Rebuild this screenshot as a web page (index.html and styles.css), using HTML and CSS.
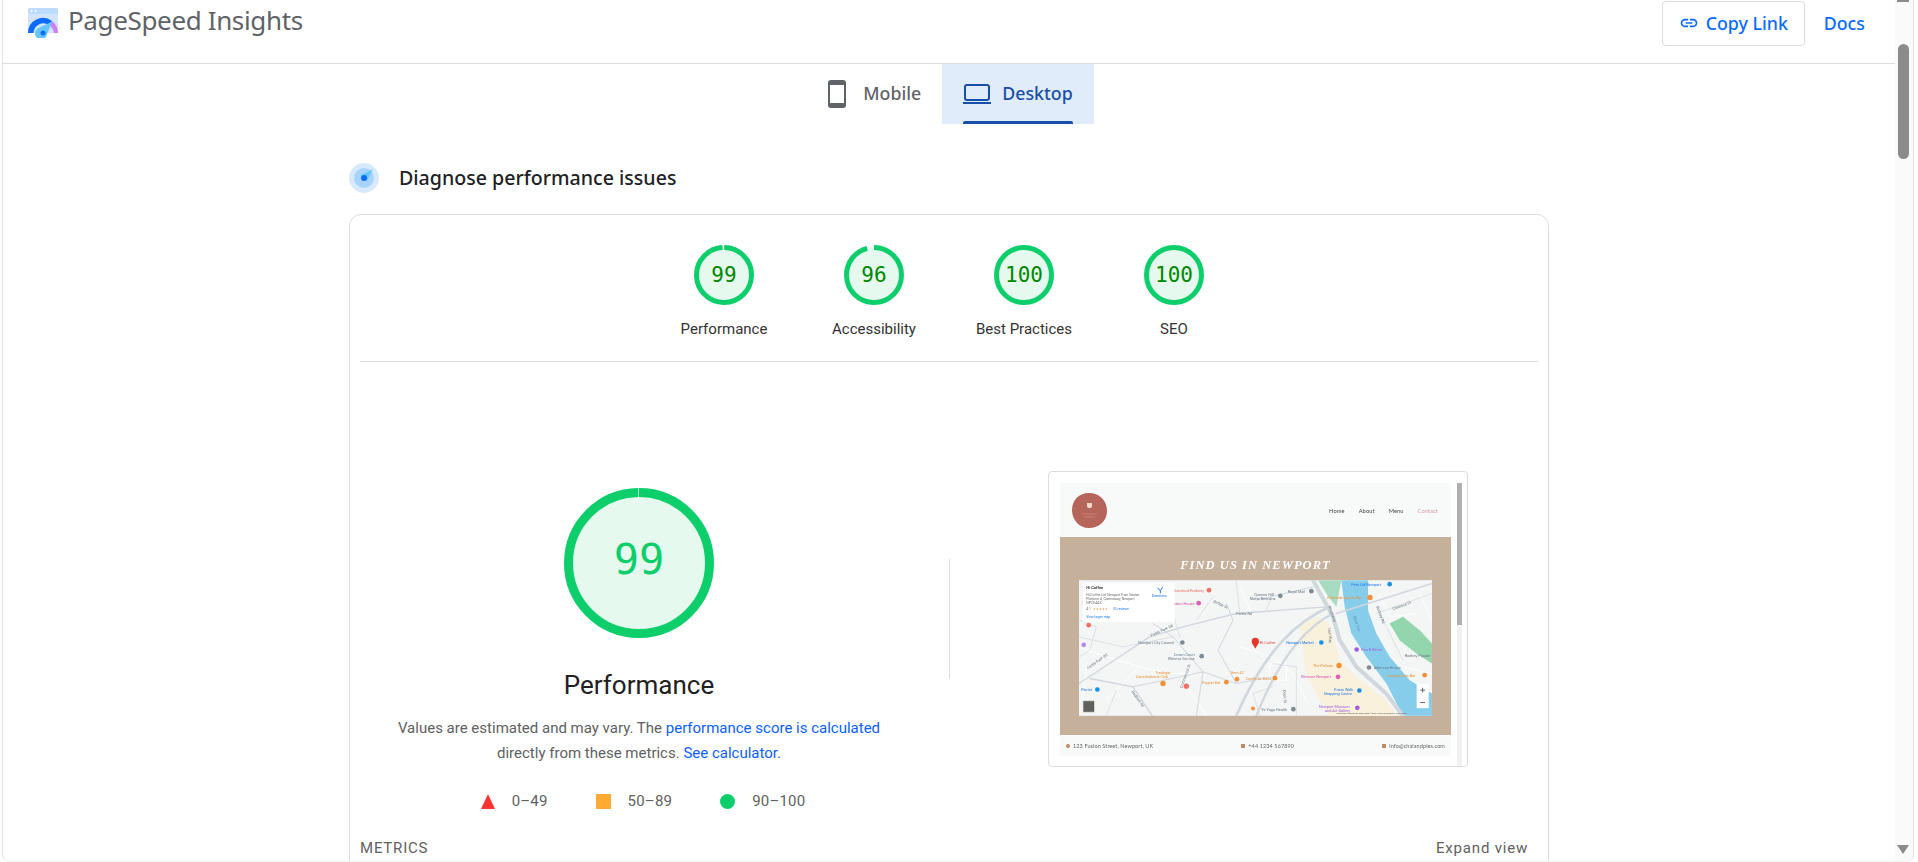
FILE: index.html
```html
<!DOCTYPE html>
<html lang="en">
<head>
  <meta charset="UTF-8" />
  <title>PageSpeed Insights</title>
  <link rel="stylesheet" href="styles.css">
</head>
<body>
  <div class="window">
    <div class="content">
      <header class="topbar">
        <div class="brand">
          <svg class="brand-logo" width="30" height="30" viewBox="0 0 30 30">
            <path d="M0 2a2 2 0 0 1 2-2h26a2 2 0 0 1 2 2v23H0z" fill="#d2e3fc"/>
            <path d="M0 2a2 2 0 0 1 2-2h26a2 2 0 0 1 2 2v4H0z" fill="#bbdcfd"/>
            <circle cx="3.5" cy="3" r="1" fill="#fff"/><circle cx="7.5" cy="3" r="1" fill="#fff"/>
            <path d="M0 25a15 15 0 0 1 24-12l-3 4a10 10 0 0 0-15.500 8z" fill="#0b6bff"/>
            <path d="M24 13a15 15 0 0 1 6 12h-4a11 11 0 0 0-5-8z" fill="#d07cf5"/>
            <path d="M24.500 13.500 19 26a6 6 0 1 1-8.500-6z" fill="#66c5fd"/>
            <circle cx="15" cy="25" r="2.500" fill="#0b6bff"/>
          </svg>
          <span class="brand-name">PageSpeed Insights</span>
        </div>
        <div class="topbar-actions">
          <button class="copy-btn">
            <svg width="20" height="20" viewBox="0 0 24 24" fill="#0b6bff"><path d="M3.900 12c0-1.710 1.390-3.100 3.100-3.100h4V7H7c-2.760 0-5 2.240-5 5s2.240 5 5 5h4v-1.900H7c-1.710 0-3.100-1.390-3.100-3.100zM8 13h8v-2H8v2zm9-6h-4v1.900h4c1.710 0 3.100 1.390 3.100 3.100s-1.390 3.100-3.100 3.100h-4V17h4c2.760 0 5-2.240 5-5s-2.240-5-5-5z"/></svg>
            Copy Link
          </button>
          <a class="docs-link">Docs</a>
        </div>
      </header>

      <nav class="tabs">
        <div class="tab">
          <svg class="tab-phone" width="18" height="28" viewBox="0 0 18 28"><rect x="1" y="1" width="16" height="26" rx="2" fill="none" stroke="#5f6368" stroke-width="2"/><rect x="1" y="1" width="16" height="4" rx="1.500" fill="#5f6368"/><rect x="1" y="23" width="16" height="4" rx="1.500" fill="#5f6368"/></svg>
          <span>Mobile</span>
        </div>
        <div class="tab tab-active">
          <svg width="28" height="20" viewBox="0 0 28 20"><rect x="2" y="1" width="24" height="15" rx="2" fill="none" stroke="#174ea6" stroke-width="2"/><rect x="0" y="18" width="28" height="2" fill="#174ea6"/></svg>
          <span>Desktop</span>
        </div>
      </nav>

      <main class="report">
        <div class="report-title">
          <svg width="30" height="30" viewBox="0 0 30 30">
            <circle cx="15" cy="15" r="15" fill="#d9e9fd"/>
            <circle cx="15" cy="15" r="10" fill="#a8d4fc"/>
            <path d="M24 6 17.500 18.500 11.500 12.500z" fill="#66c5fd"/>
            <circle cx="15" cy="15" r="3" fill="#0b6bff"/>
          </svg>
          <h2>Diagnose performance issues</h2>
        </div>

        <section class="card">
          <div class="gauges">
            <div class="gauge">
              <svg width="60" height="60" viewBox="0 0 60 60"><circle class="ring-fill" cx="30" cy="30" r="27.500"/><circle class="ring" cx="30" cy="30" r="27.500" pathLength="100" stroke-dasharray="99 1" transform="rotate(-89.500 30 30)"/><text x="30" y="37" class="ring-num">99</text></svg>
              <div class="gauge-label">Performance</div>
            </div>
            <div class="gauge">
              <svg width="60" height="60" viewBox="0 0 60 60"><circle class="ring-fill" cx="30" cy="30" r="27.500"/><circle class="ring" cx="30" cy="30" r="27.500" pathLength="100" stroke-dasharray="96 4" transform="rotate(-90 30 30)"/><text x="30" y="37" class="ring-num">96</text></svg>
              <div class="gauge-label">Accessibility</div>
            </div>
            <div class="gauge">
              <svg width="60" height="60" viewBox="0 0 60 60"><circle class="ring-fill" cx="30" cy="30" r="27.500"/><circle class="ring" cx="30" cy="30" r="27.500"/><text x="30" y="37" class="ring-num">100</text></svg>
              <div class="gauge-label">Best Practices</div>
            </div>
            <div class="gauge">
              <svg width="60" height="60" viewBox="0 0 60 60"><circle class="ring-fill" cx="30" cy="30" r="27.500"/><circle class="ring" cx="30" cy="30" r="27.500"/><text x="30" y="37" class="ring-num">100</text></svg>
              <div class="gauge-label">SEO</div>
            </div>
          </div>

          <div class="detail">
            <div class="score-col">
              <svg width="150" height="150" viewBox="0 0 150 150"><circle class="ring-fill" cx="75" cy="75" r="70.500"/><circle class="ring ring-big" cx="75" cy="75" r="70.500" pathLength="100" stroke-dasharray="99.850 .15" transform="rotate(-90 75 75)"/><text x="75" y="86" class="big-num">99</text></svg>
              <h3>Performance</h3>
              <p class="score-note">Values are estimated and may vary. The <a>performance score is calculated</a><br>directly from these metrics. <a>See calculator.</a></p>
              <div class="legend">
                <div class="legend-item"><span class="tri"></span>0–49</div>
                <div class="legend-item"><span class="sq"></span>50–89</div>
                <div class="legend-item"><span class="dot"></span>90–100</div>
              </div>
            </div>
            <div class="vline"></div>
            <div class="shot">
              <div class="shot-page">
                <div class="site-nav">
                  <svg width="35" height="35" viewBox="0 0 35 35">
                    <path d="M17 0C27 0 35 7 35 18 35 28 27 35 17 35 7 35 0 27 0 17 0 7 7 0 17 0z" fill="#b5655a"/>
                    <path d="M15 10h5v3a2 2 0 0 1-2 2h-1a2 2 0 0 1-2-2z" fill="#f1d9cc"/>
                    <path d="M10 21h15M12 24h11" stroke="#cf9387" stroke-width=".7"/>
                  </svg>
                  <div class="site-links"><span>Home</span><span>About</span><span>Menu</span><span class="site-current">Contact</span></div>
                </div>
                <div class="site-hero">
                  <div class="site-title">FIND US IN NEWPORT</div>
                  <svg class="map" width="353" height="136" viewBox="118 360 1059 407">
                    <rect x="118" y="360" width="1059" height="407" fill="#f4f5f5"/>
                    <path d="M780 500 830 470 870 490 900 600 950 650 1040 720 1070 767H870L840 720 800 640z" fill="#faf1dc"/>
                    <path d="M835 360H905L890 440 860 400z" fill="#a8dcc0"/>
                    <path d="M1050 490 1090 470 1140 510 1177 550V610L1130 580 1080 540z" fill="#93d6ad"/>
                    <path d="M905 360H985L985 450 1010 520 1050 590 1110 660 1177 700V767H1090L1040 670 980 590 935 520 915 440z" fill="#86cdec"/>
                    <g fill="none" stroke="#fff" stroke-width="3">
                      <path d="M118 560 200 590 300 620 380 640 480 640"/>
                      <path d="M200 720 260 660 300 620"/>
                      <path d="M600 560 700 590 760 640 800 720"/>
                      <path d="M680 610 740 605 740 660 690 660 690 610"/>
                      <path d="M1020 400 1050 470 1130 460"/>
                      <path d="M600 380 640 470"/>
                      <path d="M440 680 500 767"/>
                      <path d="M140 620 130 720"/>
                      <path d="M1090 620 1177 640"/>
                      <path d="M1140 400 1177 480"/>
                    </g>
                    <g fill="none" stroke="#d0d7dd" stroke-linecap="round">
                      <path d="M820 360 880 470 900 540 950 620 1040 700 1090 767" stroke-width="12"/>
                      <path d="M870 440C780 480 680 560 590 767" stroke-width="8"/>
                      <path d="M880 460C800 500 720 590 650 767" stroke-width="7"/>
                      <path d="M890 460 1177 370" stroke-width="5"/>
                      <path d="M118 670 330 530 430 500 590 460 860 440" stroke-width="4"/>
                      <path d="M150 655 280 680 340 770" stroke-width="4"/>
                      <path d="M280 680 490 635 590 670 700 650" stroke-width="3"/>
                      <path d="M490 635 470 767" stroke-width="3"/>
                      <path d="M490 635 400 530 340 490" stroke-width="3"/>
                      <path d="M560 430 580 480 535 570 590 670" stroke-width="3"/>
                      <path d="M118 530 250 560 400 530" stroke-width="2"/>
                      <path d="M520 410 470 480" stroke-width="2"/>
                      <path d="M700 610 770 620 770 767" stroke-width="2"/>
                      <path d="M650 420 820 380" stroke-width="3"/>
                      <path d="M1010 460 1177 400" stroke-width="2"/>
                      <path d="M1010 440 1090 600" stroke-width="2"/>
                      <path d="M230 690 200 767" stroke-width="2"/>
                      <path d="M400 460 420 530M590 360 600 460M700 400 680 450" stroke-width="2"/>
                      <path d="M120 480 170 500 150 570 120 590" stroke-width="2"/>
                      <path d="M660 767 640 700 700 680" stroke-width="2"/>
                    </g>
                    <g class="map-labels">
                      <text x="400" y="395" fill="#ea6a5e">Stamford Podiatry</text>
                      <text x="400" y="434" fill="#d94fae">Salon House</text>
                      <text x="296" y="552" fill="#6b7a84">Newport City Council</text>
                      <text x="402" y="587" fill="#6b7a84">Crown Court</text>
                      <text x="384" y="599" fill="#6b7a84">Witness Service</text>
                      <text x="347" y="641" fill="#e8913a">Tredegar</text>
                      <text x="288" y="654" fill="#e8913a">Constitutional Club</text>
                      <text x="487" y="671" fill="#e8913a">Pepper Eat</text>
                      <text x="573" y="641" fill="#e8913a">Gem 42</text>
                      <text x="618" y="659" fill="#e8913a">Castle St. Kava</text>
                      <text x="660" y="552" fill="#ea4335">Hi Coffee</text>
                      <text x="740" y="552" fill="#1a73e8">Newport Market</text>
                      <text x="863" y="416" fill="#e8913a">Riverside Sports Bar</text>
                      <text x="935" y="377" fill="#1a73e8">Pets Ltd Newport</text>
                      <text x="644" y="407" fill="#6b7a84">Queens Hill</text>
                      <text x="630" y="419" fill="#6b7a84">Motte Remains</text>
                      <text x="744" y="398" fill="#6b7a84">Royal Mail</text>
                      <text x="965" y="572" fill="#a25ddc">Pen &amp; Barrel</text>
                      <text x="820" y="620" fill="#e8913a">The Pelican</text>
                      <text x="1002" y="627" fill="#6b7a84">Alderson House</text>
                      <text x="1042" y="650" fill="#e8913a">Queens Cafe Bar</text>
                      <text x="785" y="654" fill="#d94fae">Mercure Newport</text>
                      <text x="884" y="692" fill="#1a73e8">Friars Walk</text>
                      <text x="852" y="704" fill="#1a73e8">Shopping Centre</text>
                      <text x="838" y="744" fill="#a25ddc">Newport Museum</text>
                      <text x="856" y="756" fill="#a25ddc">and Art Gallery</text>
                      <text x="665" y="752" fill="#6b7a84">Ye Yoga Health</text>
                      <text x="1095" y="590" fill="#6b7a84">Rodney Parade</text>
                      <text x="125" y="692" fill="#1a73e8">Florist</text>
                      <text x="335" y="530" fill="#6b7a84" transform="rotate(-25 335 530)">Fields Park Rd</text>
                      <text x="145" y="628" fill="#6b7a84" transform="rotate(-35 145 628)">Fields Park Rd</text>
                      <text x="520" y="426" fill="#6b7a84" transform="rotate(25 520 426)">Bridge St</text>
                      <text x="590" y="464" fill="#6b7a84">Fields Rd</text>
                      <text x="940" y="470" fill="#5d8fa8" transform="rotate(70 940 470)">River Usk</text>
                      <text x="866" y="440" fill="#6b7a84" transform="rotate(70 866 440)">Kingsway</text>
                      <text x="865" y="505" fill="#6b7a84" transform="rotate(85 865 505)">Usk Way</text>
                      <text x="1010" y="440" fill="#6b7a84" transform="rotate(70 1010 440)">Rodney Rd</text>
                      <text x="1060" y="450" fill="#6b7a84" transform="rotate(-20 1060 450)">Clarence Pl</text>
                      <text x="275" y="695" fill="#6b7a84" transform="rotate(55 275 695)">Bedford Rd</text>
                      <text x="470" y="655" fill="#6b7a84" transform="rotate(-70 470 700)">Commercial St</text>
                      <text x="730" y="690" fill="#6b7a84" transform="rotate(85 730 690)">Dock St</text>
                    </g>
                    <g>
                      <circle cx="147" cy="495" r="7" fill="#ee6f63"/><circle cx="132" cy="554" r="7" fill="#b78ae8"/>
                      <circle cx="508" cy="390" r="7" fill="#ee6f63"/><circle cx="477" cy="429" r="7" fill="#e25bb8"/>
                      <circle cx="722" cy="407" r="7" fill="#7d8b96"/><circle cx="815" cy="393" r="7" fill="#7d8b96"/>
                      <circle cx="428" cy="547" r="7" fill="#7d8b96"/><circle cx="486" cy="588" r="7" fill="#7d8b96"/>
                      <circle cx="370" cy="670" r="8" fill="#f0913a"/><circle cx="440" cy="678" r="8" fill="#ee6f63"/>
                      <circle cx="560" cy="666" r="7" fill="#f0913a"/><circle cx="592" cy="657" r="7" fill="#f0913a"/>
                      <circle cx="706" cy="654" r="7" fill="#f0913a"/><circle cx="845" cy="547" r="7" fill="#1a8fe8"/>
                      <circle cx="991" cy="412" r="8" fill="#f0913a"/><circle cx="1050" cy="372" r="7" fill="#1a8fe8"/>
                      <circle cx="951" cy="568" r="7" fill="#a25ddc"/><circle cx="898" cy="616" r="8" fill="#f0913a"/>
                      <circle cx="988" cy="622" r="7" fill="#7d8b96"/><circle cx="1155" cy="645" r="7" fill="#f0913a"/>
                      <circle cx="895" cy="650" r="7" fill="#e25bb8"/><circle cx="959" cy="691" r="7" fill="#1a8fe8"/>
                      <circle cx="953" cy="743" r="7" fill="#a25ddc"/><circle cx="761" cy="747" r="7" fill="#7d8b96"/>
                      <circle cx="173" cy="688" r="7" fill="#1a8fe8"/><circle cx="640" cy="745" r="6" fill="#f0913a"/>
                    </g>
                    <path d="M647 566C640 552 636 550 636 544a11 11 0 0 1 22 0C658 550 654 552 647 566z" fill="#e8352b"/>
                    <rect x="130" y="368" width="275" height="117" fill="#fff"/>
                    <text x="140" y="388" class="map-place">Hi Coffee</text>
                    <g class="map-info" fill="#666">
                      <text x="140" y="407">Hi Coffee Ltd, Newport Train Station</text>
                      <text x="140" y="419">Platform 4, Queensway, Newport</text>
                      <text x="140" y="431">NP20 4AX</text>
                      <text x="140" y="451">4.1</text>
                      <text x="160" y="451" fill="#f0913a">★★★★★</text>
                      <text x="220" y="451" fill="#1a73e8">32 reviews</text>
                      <text x="140" y="473" fill="#1a73e8">View larger map</text>
                      <text x="336" y="411" fill="#1a73e8">Directions</text>
                    </g>
                    <path d="M354 383 362 392 369 381M362 392V399" fill="none" stroke="#1a73e8" stroke-width="3"/>
                    <rect x="1131" y="672" width="36" height="72" fill="#fff"/>
                    <path d="M1142 690H1156M1149 683V697M1142 727H1156" stroke="#666" stroke-width="3"/>
                    <rect x="130" y="722" width="34" height="34" fill="#60615c" stroke="#ddd" stroke-width="2"/>
                    <text x="890" y="763" class="map-credit">Keyboard shortcuts   Map data ©2024   Terms   Report a map error</text>
                  </svg>
                </div>
                <div class="site-footer">
                  <span><i class="foot-mark foot-pin"></i>123 Fusion Street, Newport, UK</span>
                  <span><i class="foot-mark foot-tel"></i>+44 1234 567890</span>
                  <span><i class="foot-mark foot-mail"></i>info@chaiandpies.com</span>
                </div>
              </div>
              <div class="shot-scroll"><div class="shot-thumb"></div></div>
            </div>
          </div>

          <div class="metrics-row">
            <span class="metrics-title">METRICS</span>
            <span class="expand">Expand view</span>
          </div>
        </section>
      </main>
    </div>

    <aside class="scrollbar">
      <div class="arrow-up"></div>
      <div class="thumb"></div>
      <div class="arrow-down"></div>
    </aside>
  </div>
</body>
</html>
```

FILE: styles.css
```css
* {
  box-sizing: border-box;
}
html, body {
  margin: 0;
  height: 100%;
  overflow: hidden;
}
body {
  padding: 0 4px 0 2px;
  background: #fff;
  font-family: Roboto, sans-serif;
  color: #202124;
}
a {
  color: #0b5fff;
}
h2, h3, p {
  margin: 0;
}

.window {
  display: flex;
  height: 862px;
  overflow: hidden;
  border: 1px solid #e2e2e2;
  border-top: 0;
  border-bottom-color: #f1f1f1;
  border-radius: 0 0 8px 8px;
}
.content {
  flex: 1;
  min-width: 0;
}

/* top bar */
.topbar {
  height: 64px;
  display: flex;
  justify-content: space-between;
  border-bottom: 1px solid #dadce0;
}
.brand {
  display: flex;
  align-items: flex-start;
  padding: 8px 0 0 25px;
}
.brand-name {
  margin: -6px 0 0 10px;
  font-family: "Noto Sans", sans-serif;
  font-size: 26px;
  line-height: 36px;
  letter-spacing: -.36px;
  color: #5f6368;
}
.topbar-actions {
  display: flex;
  align-items: flex-start;
  padding: 1px 30px 0 0;
}
.copy-btn {
  display: flex;
  align-items: center;
  justify-content: center;
  gap: 7px;
  width: 143px;
  height: 45px;
  padding: 0 0 2px;
  background: #fff;
  border: 1px solid #dadce0;
  border-radius: 4px;
  font-family: "Noto Sans", sans-serif;
  font-size: 17.800px;
  font-weight: 500;
  color: #0b6bff;
}
.docs-link {
  margin: 10px 0 0 19px;
  font-family: "Noto Sans", sans-serif;
  font-size: 17.800px;
  font-weight: 500;
  color: #0b6bff;
}

/* tabs */
.tabs {
  display: flex;
  justify-content: center;
  height: 60px;
  padding-left: 3px;
}
.tab {
  display: flex;
  align-items: center;
  gap: 11px;
  padding: 0 21px;
  font-family: "Noto Sans", sans-serif;
  font-size: 17.800px;
  font-weight: 500;
  color: #5f6368;
}
.tab span {
  margin-top: -2px;
}
.tab-phone {
  margin-right: 6px;
}
.tab-active {
  position: relative;
  background: #e1ecfb;
  color: #174ea6;
}
.tab-active::after {
  content: "";
  position: absolute;
  left: 21px;
  right: 21px;
  bottom: 0;
  height: 3px;
  background: #174ea6;
  border-radius: 2px 2px 0 0;
}

/* report */
.report {
  width: 1200px;
  margin: 0 auto;
}
.report-title {
  display: flex;
  align-items: center;
  gap: 20px;
  height: 30px;
  margin-top: 39px;
}
.report-title h2 {
  margin-top: -2px;
  font-family: "Noto Sans", sans-serif;
  font-size: 19.600px;
  font-weight: 500;
  color: #202124;
}
.card {
  margin-top: 21px;
  height: 700px;
  padding: 0 10px;
  border: 1px solid #dadce0;
  border-radius: 12px;
}
.gauges {
  display: flex;
  justify-content: center;
  height: 147px;
  padding-top: 30px;
  border-bottom: 1px solid #dadce0;
}
.gauge {
  width: 150px;
  display: flex;
  flex-direction: column;
  align-items: center;
}
.gauge-label {
  margin-top: 14px;
  font-size: 15px;
  line-height: 20px;
  color: #333;
}
.ring-fill {
  fill: #e5f9ee;
}
.ring {
  fill: none;
  stroke: #0cce6b;
  stroke-width: 5;
}
.ring-big {
  stroke-width: 9;
}
.ring-num {
  font-family: "DejaVu Sans Mono", monospace;
  font-size: 21px;
  fill: #008800;
  text-anchor: middle;
}
.big-num {
  font-family: "DejaVu Sans Mono", monospace;
  font-size: 42px;
  fill: #0cce6b;
  text-anchor: middle;
}

.detail {
  display: flex;
  align-items: flex-start;
  padding-top: 109px;
}
.score-col {
  width: 558px;
  margin-top: 17px;
  display: flex;
  flex-direction: column;
  align-items: center;
}
.score-col h3 {
  margin-top: 30px;
  font-size: 26px;
  font-weight: 400;
  line-height: 34px;
  color: #212121;
}
.score-note {
  margin-top: 14px;
  font-size: 15px;
  line-height: 25px;
  text-align: center;
  color: #616161;
}
.legend {
  display: flex;
  margin-top: 23px;
  height: 24px;
  padding-left: 8px;
}
.legend-item {
  display: flex;
  align-items: center;
  gap: 17px;
  margin-right: 48px;
  font-size: 15px;
  color: #616161;
  letter-spacing: .2px;
}
.legend-item:last-child {
  margin-right: 0;
}
.tri {
  width: 0;
  height: 0;
  border-left: 7.500px solid transparent;
  border-right: 7.500px solid transparent;
  border-bottom: 15px solid #ff3333;
}
.sq {
  width: 15px;
  height: 15px;
  background: #ffaa33;
}
.dot {
  width: 15px;
  height: 15px;
  border-radius: 50%;
  background: #0cce6b;
}
.vline {
  width: 1px;
  height: 120px;
  margin: 88px 98px 0 31px;
  background: #dadce0;
}

/* page screenshot */
.shot {
  width: 420px;
  height: 296px;
  display: flex;
  padding: 11px 5px 10px 11px;
  border: 1px solid #dadce0;
  border-radius: 4px;
}
.shot-page {
  width: 391px;
  filter: blur(.6px);
  display: flex;
  flex-direction: column;
  font-family: Lato, sans-serif;
}
.site-nav {
  height: 54px;
  display: flex;
  align-items: center;
  justify-content: space-between;
  padding: 0 13px 0 12px;
  background: #f8f9f9;
}
.site-links {
  display: flex;
  gap: 14px;
  font-size: 5.700px;
  letter-spacing: .1px;
  color: #444;
}
.site-current {
  color: #d79aa6;
}
.site-hero {
  height: 198px;
  padding-top: 21px;
  background: #c4b09b;
  text-align: center;
}
.site-title {
  height: 22px;
  font-family: "Liberation Serif", serif;
  font-style: italic;
  font-weight: 700;
  font-size: 12.500px;
  line-height: 14px;
  letter-spacing: 1.050px;
  color: #fff;
}
.map {
  display: block;
  margin: 0 auto 0 19px;
}
.map-labels text {
  font-family: Roboto, sans-serif;
  font-size: 11.500px;
}
.map-place {
  font-family: Roboto, sans-serif;
  font-size: 12px;
  font-weight: 700;
  fill: #333;
}
.map-info text {
  font-family: Roboto, sans-serif;
  font-size: 10px;
}
.map-credit {
  font-family: Roboto, sans-serif;
  font-size: 7.500px;
  fill: #555;
}
.site-footer {
  height: 21px;
  display: flex;
  align-items: center;
  justify-content: space-between;
  padding: 0 6px;
  background: #f8f9f9;
  font-size: 5.500px;
  letter-spacing: .1px;
  color: #666;
}
.foot-mark {
  display: inline-block;
  width: 4px;
  height: 4px;
  margin-right: 3px;
  background: #c08a63;
}
.foot-pin {
  border-radius: 50%;
}
.shot-scroll {
  width: 5px;
  height: 283px;
  margin-left: 6px;
  background: #f1f1f1;
}
.shot-thumb {
  height: 142px;
  background: #b0b0b0;
}

.metrics-row {
  display: flex;
  justify-content: space-between;
  padding: 0 10px 0 0;
  margin-top: 26px;
  font-size: 15px;
  line-height: 18px;
  letter-spacing: .8px;
  color: #616161;
}

/* window scrollbar */
.scrollbar {
  position: relative;
  width: 18px;
  background: #fafafa;
}
.thumb {
  position: absolute;
  top: 44px;
  left: 3px;
  width: 11px;
  height: 115px;
  border-radius: 6px;
  background: #8b8b8b;
}
.arrow-up {
  position: absolute;
  top: 0;
  left: 2px;
  width: 12px;
  height: 2px;
  background: #8b8b8b;
}
.arrow-down {
  position: absolute;
  top: 845px;
  left: 2px;
  border-left: 6px solid transparent;
  border-right: 6px solid transparent;
  border-top: 9px solid #8b8b8b;
}
```
